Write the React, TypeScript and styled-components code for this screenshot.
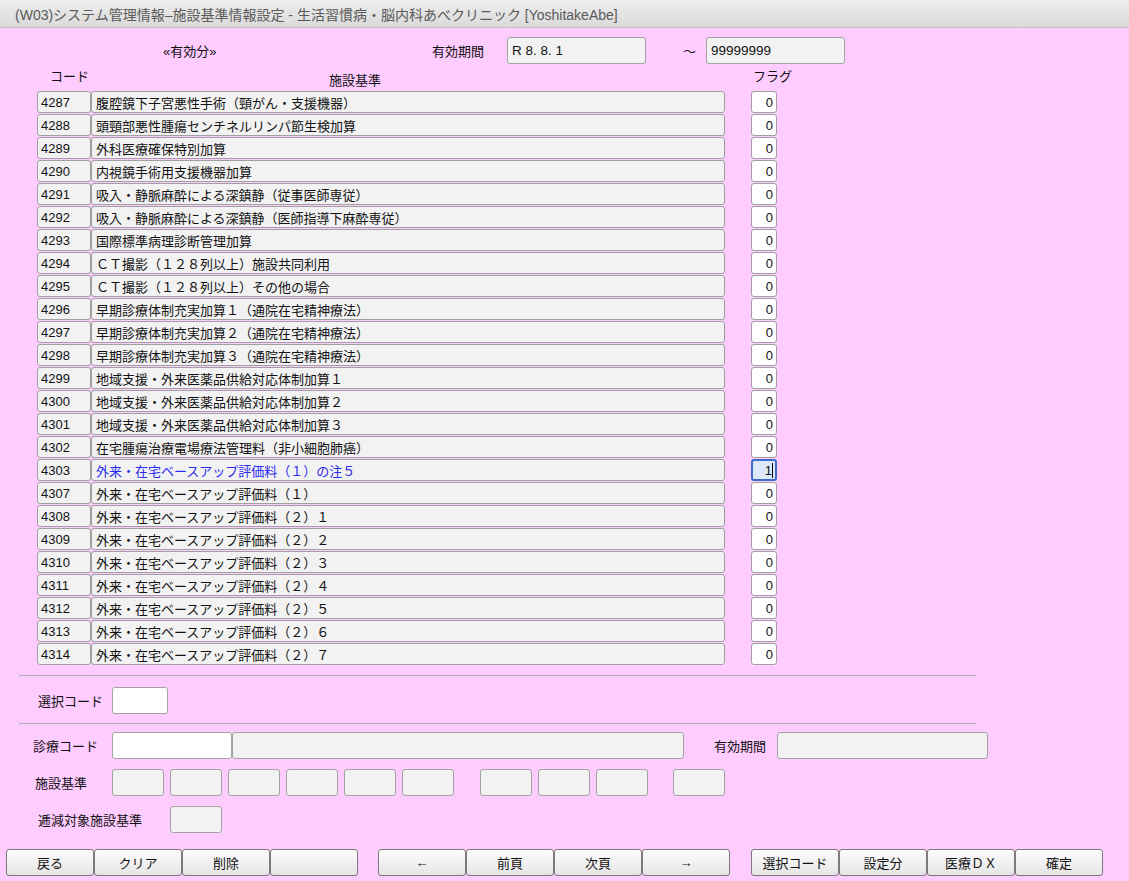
import React from 'react';
import styled, { createGlobalStyle, css } from 'styled-components';

const GlobalStyle = createGlobalStyle`
  html, body {
    margin: 0;
    padding: 0;
    background: #ffccff;
  }
  body {
    font-family: "Liberation Sans", "Noto Sans CJK JP", sans-serif;
    font-size: 13px;
    color: #111;
  }
`;

const Window = styled.div`
  width: 1129px;
  height: 881px;
  background: #ffccff;
  display: flex;
  flex-direction: column;
  overflow: hidden;
`;

const TitleBar = styled.div`
  height: 28px;
  box-sizing: border-box;
  padding-left: 15px;
  display: flex;
  align-items: center;
  background: linear-gradient(#eeeeee, #dadada);
  border-bottom: 1px solid #c4c4c4;
  color: #5a5a5a;
  font-size: 14px;
  white-space: nowrap;
`;

const TopRow = styled.div`
  display: flex;
  align-items: center;
  height: 27px;
  margin-top: 9px;
  padding-left: 163px;
`;

const Text = styled.span<{ $ml?: number; $mt?: number; $w?: number }>`
  margin-left: ${p => p.$ml ?? 0}px;
  margin-top: ${p => p.$mt ?? 0}px;
  ${p => p.$w !== undefined && `width: ${p.$w}px;`}
  flex-shrink: 0;
  white-space: nowrap;
`;

const Field = styled.div<{ $w: number; $white?: boolean; $ml?: number }>`
  box-sizing: border-box;
  width: ${p => p.$w}px;
  height: 27px;
  margin-left: ${p => p.$ml ?? 0}px;
  border: 1px solid #a3a3a3;
  border-radius: 3px;
  background: ${p => (p.$white ? '#ffffff' : '#f2f2f2')};
  padding: 0 4px;
  display: flex;
  align-items: center;
  font-size: 13.5px;
  flex-shrink: 0;
`;

const HeaderRow = styled.div`
  display: flex;
  align-items: flex-start;
  height: 27px;
  padding-left: 50px;
  padding-top: 2px;
  box-sizing: border-box;
`;

const List = styled.div`
  display: flex;
  flex-direction: column;
  gap: 1px;
  padding-left: 37px;
`;

const Row = styled.div`
  display: grid;
  grid-template-columns: 54px 634px 26px;
  height: 22px;
`;

const cellBase = css`
  box-sizing: border-box;
  height: 22px;
  border: 1px solid #a0a0a0;
  border-radius: 3px;
  background: #f2f2f2;
  display: flex;
  align-items: center;
  white-space: nowrap;
  overflow: hidden;
`;

const CodeCell = styled.div`
  ${cellBase};
  padding-left: 3px;
`;

const NameCell = styled.div<{ $hl?: boolean }>`
  ${cellBase};
  padding-left: 4px;
  color: ${p => (p.$hl ? '#2b2bef' : '#111')};
`;

const FlagCell = styled.div<{ $active?: boolean }>`
  ${cellBase};
  margin-left: 26px;
  width: 26px;
  justify-content: flex-end;
  padding-right: 3px;
  background: #ffffff;
  ${p =>
    p.$active &&
    css`
      background: #dde9fa;
      border: 2px solid #3a6cc8;
      padding-right: 2px;
    `}
`;

const Caret = styled.span`
  display: inline-block;
  width: 1px;
  height: 15px;
  background: #000;
`;

const Separator = styled.div<{ $mt: number }>`
  margin: ${p => p.$mt}px 0 0 19px;
  width: 957px;
  height: 1px;
  background: #b0b0b0;
`;

const FormRow = styled.div<{ $pad: number; $mt: number }>`
  display: flex;
  align-items: center;
  height: 27px;
  margin-top: ${p => p.$mt}px;
  padding-left: ${p => p.$pad}px;
`;

const Label = styled.span<{ $w: number }>`
  width: ${p => p.$w}px;
  flex-shrink: 0;
  white-space: nowrap;
`;

const Boxes = styled.div<{ $ml?: number }>`
  display: flex;
  gap: 6px;
  margin-left: ${p => p.$ml ?? 0}px;
`;

const ButtonBar = styled.div`
  display: flex;
  margin-top: 16px;
  padding-left: 6px;
`;

const ButtonGroup = styled.div<{ $ml?: number }>`
  display: flex;
  margin-left: ${p => p.$ml ?? 0}px;
`;

const Button = styled.button`
  box-sizing: border-box;
  width: 88px;
  height: 27px;
  border: 1px solid #7a7a7a;
  border-radius: 3px;
  background: linear-gradient(#fdfdfd, #e5e5e5);
  font-family: inherit;
  font-size: 13px;
  color: #111;
  padding: 0;
  cursor: pointer;
`;

const rows: [string, string][] = [
  ['4287', '腹腔鏡下子宮悪性手術（頸がん・支援機器）'],
  ['4288', '頭頸部悪性腫瘍センチネルリンパ節生検加算'],
  ['4289', '外科医療確保特別加算'],
  ['4290', '内視鏡手術用支援機器加算'],
  ['4291', '吸入・静脈麻酔による深鎮静（従事医師専従）'],
  ['4292', '吸入・静脈麻酔による深鎮静（医師指導下麻酔専従）'],
  ['4293', '国際標準病理診断管理加算'],
  ['4294', 'ＣＴ撮影（１２８列以上）施設共同利用'],
  ['4295', 'ＣＴ撮影（１２８列以上）その他の場合'],
  ['4296', '早期診療体制充実加算１（通院在宅精神療法）'],
  ['4297', '早期診療体制充実加算２（通院在宅精神療法）'],
  ['4298', '早期診療体制充実加算３（通院在宅精神療法）'],
  ['4299', '地域支援・外来医薬品供給対応体制加算１'],
  ['4300', '地域支援・外来医薬品供給対応体制加算２'],
  ['4301', '地域支援・外来医薬品供給対応体制加算３'],
  ['4302', '在宅腫瘍治療電場療法管理料（非小細胞肺癌）'],
  ['4303', '外来・在宅ベースアップ評価料（１）の注５'],
  ['4307', '外来・在宅ベースアップ評価料（１）'],
  ['4308', '外来・在宅ベースアップ評価料（２）１'],
  ['4309', '外来・在宅ベースアップ評価料（２）２'],
  ['4310', '外来・在宅ベースアップ評価料（２）３'],
  ['4311', '外来・在宅ベースアップ評価料（２）４'],
  ['4312', '外来・在宅ベースアップ評価料（２）５'],
  ['4313', '外来・在宅ベースアップ評価料（２）６'],
  ['4314', '外来・在宅ベースアップ評価料（２）７'],
];

const ACTIVE = '4303';

export default function App() {
  return (
    <Window>
      <GlobalStyle />
      <TitleBar>(W03)システム管理情報–施設基準情報設定 - 生活習慣病・脳内科あべクリニック [YoshitakeAbe]</TitleBar>

      <TopRow>
        <Text $w={64}>«有効分»</Text>
        <Text $ml={205} $w={52}>有効期間</Text>
        <Field $w={139} $ml={23}>R 8. 8. 1</Field>
        <Text $ml={37} $w={14}>～</Text>
        <Field $w={139} $ml={9}>99999999</Field>
      </TopRow>

      <HeaderRow>
        <Text>コード</Text>
        <Text $ml={240} $mt={4}>施設基準</Text>
        <Text $ml={372}>フラグ</Text>
      </HeaderRow>

      <List>
        {rows.map(([code, name]) => (
          <Row key={code}>
            <CodeCell>{code}</CodeCell>
            <NameCell $hl={code === ACTIVE}>{name}</NameCell>
            <FlagCell $active={code === ACTIVE}>
              {code === ACTIVE ? (
                <>
                  1<Caret />
                </>
              ) : (
                '0'
              )}
            </FlagCell>
          </Row>
        ))}
      </List>

      <Separator $mt={10} />

      <FormRow $pad={38} $mt={11}>
        <Label $w={74}>選択コード</Label>
        <Field $w={56} $white />
      </FormRow>

      <Separator $mt={9} />

      <FormRow $pad={33} $mt={8}>
        <Label $w={79}>診療コード</Label>
        <Field $w={120} $white />
        <Field $w={452} />
        <Text $ml={30}>有効期間</Text>
        <Field $w={211} $ml={11} />
      </FormRow>

      <FormRow $pad={35} $mt={10}>
        <Label $w={77}>施設基準</Label>
        <Boxes>
          {[0, 1, 2, 3, 4, 5].map(i => (
            <Field key={i} $w={52} />
          ))}
        </Boxes>
        <Boxes $ml={26}>
          {[0, 1, 2].map(i => (
            <Field key={i} $w={52} />
          ))}
        </Boxes>
        <Boxes $ml={25}>
          <Field $w={52} />
        </Boxes>
      </FormRow>

      <FormRow $pad={38} $mt={10}>
        <Label $w={132}>逓減対象施設基準</Label>
        <Field $w={52} />
      </FormRow>

      <ButtonBar>
        <ButtonGroup>
          <Button>戻る</Button>
          <Button>クリア</Button>
          <Button>削除</Button>
          <Button></Button>
        </ButtonGroup>
        <ButtonGroup $ml={20}>
          <Button>←</Button>
          <Button>前頁</Button>
          <Button>次頁</Button>
          <Button>→</Button>
        </ButtonGroup>
        <ButtonGroup $ml={21}>
          <Button>選択コード</Button>
          <Button>設定分</Button>
          <Button>医療ＤＸ</Button>
          <Button>確定</Button>
        </ButtonGroup>
      </ButtonBar>
    </Window>
  );
}
